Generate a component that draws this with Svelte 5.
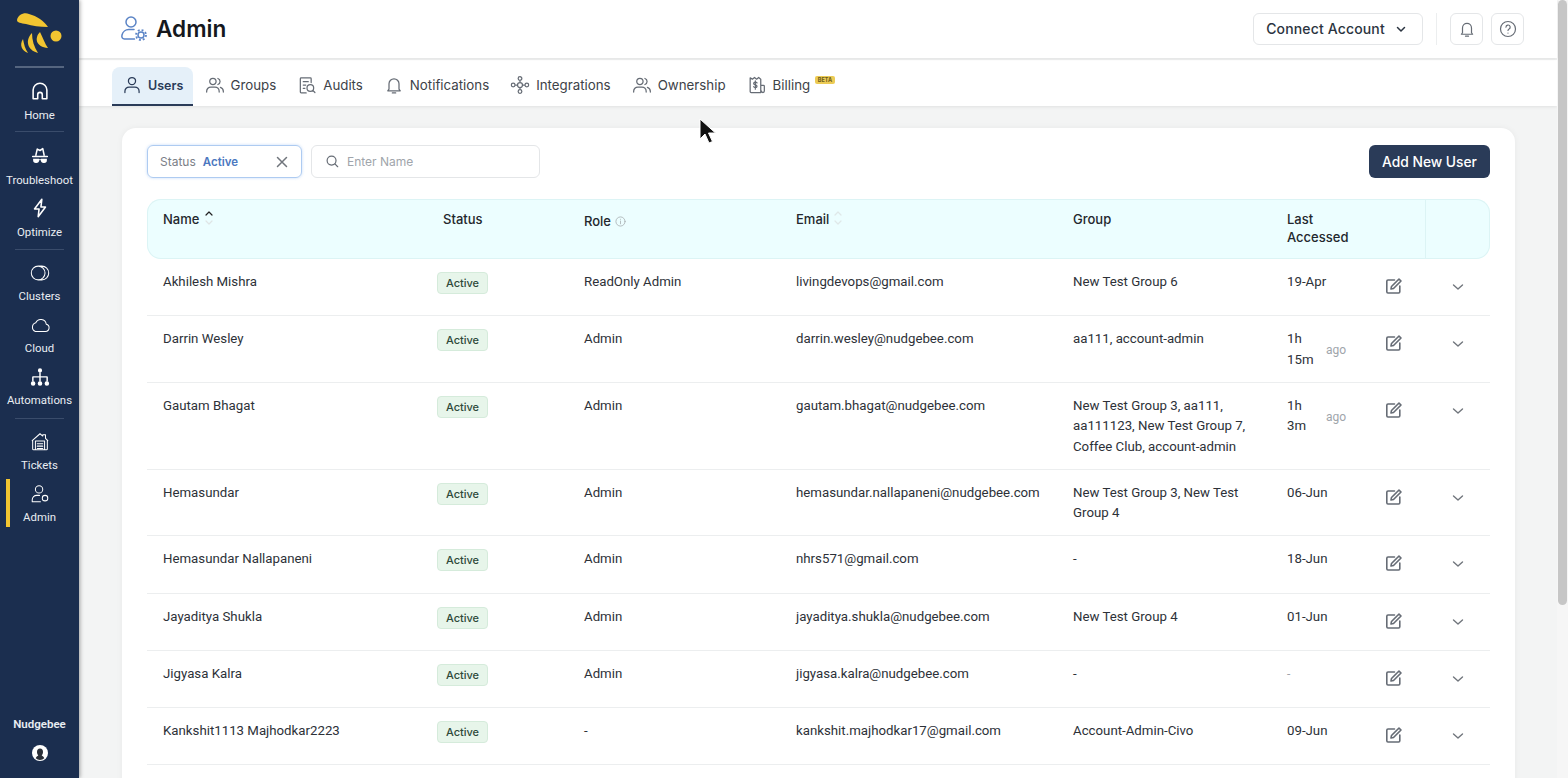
<script>
  const poke = 'M12 3a4.300 4.300 0 1 1 0 8.600a4.300 4.300 0 0 1 0-8.600z M3.500 21v-1.500a5 5 0 0 1 5-5h7a5 5 0 0 1 5 5V21';
  const people = 'M9.500 4a3.800 3.800 0 1 1 0 7.600a3.800 3.800 0 0 1 0-7.600z M2 20.500v-1a5 5 0 0 1 5-5h5a5 5 0 0 1 5 5v1 M15.500 4.200a3.800 3.800 0 0 1 0 7.200 M18.500 14.800a5 5 0 0 1 3.500 4.700v1';

  const tabs = [
    { label: 'Users', d: poke, active: true },
    { label: 'Groups', d: people },
    { label: 'Audits', d: 'M17 9V4.500a1 1 0 0 0-1-1H5a1 1 0 0 0-1 1v16a1 1 0 0 0 1 1h6 M7.500 8h6 M7.500 12h3 M7.500 16h2 M16 11.500a4 4 0 1 1 0 8a4 4 0 0 1 0-8z M19 18.500l2.500 2.500' },
    { label: 'Notifications', d: 'M6 17v-6.500a6 6 0 0 1 12 0V17l1.500 2h-15z M10 21.500h4' },
    { label: 'Integrations', d: 'M12 9a3 3 0 1 1 0 6a3 3 0 0 1 0-6z M12 2a2.200 2.200 0 1 1 0 4.400a2.200 2.200 0 0 1 0-4.400z M12 17.600a2.200 2.200 0 1 1 0 4.400a2.200 2.200 0 0 1 0-4.400z M3.800 9.800a2.200 2.200 0 1 1 0 4.400a2.200 2.200 0 0 1 0-4.400z M20.200 9.800a2.200 2.200 0 1 1 0 4.400a2.200 2.200 0 0 1 0-4.400z M12 6.400V9 M12 15v2.600 M6 12h3 M15 12h3' },
    { label: 'Ownership', d: people },
    { label: 'Billing', d: 'M16.500 21H5a1.200 1.200 0 0 1-1.200-1.200V3.500L6.500 5L9 3l2.500 2L14 3l2.500 2z M16.500 12.500h3.300a1 1 0 0 1 1 1v5.800a1.700 1.700 0 0 1-3.400 0 M12 9.500c-.5-.8-1.200-1-2-1c-1.200 0-2 .7-2 1.600c0 2.200 4 1.200 4 3.400c0 1-.9 1.600-2 1.600c-.9 0-1.600-.3-2-1 M10 7v10', beta: true }
  ];

  const nav = [
    [{ label: 'Home', d: 'M4.500 20.500v-9.500a7.500 7.500 0 0 1 15 0v9.500h-5v-4.500a2.500 2.500 0 0 0-5 0v4.500z' }],
    [
      { label: 'Troubleshoot', d: 'M7.500 11L9 4.500l3 1.500l3-2l1.500 7 M4 12.500h16', solid: 'M4.500 15h6.500v1.500a3 3 0 0 1-3 3H7.500a3 3 0 0 1-3-3z M13 15h6.500v1.500a3 3 0 0 1-3 3H16a3 3 0 0 1-3-3z M11 15.500h2v1h-2z' },
      { label: 'Optimize', d: 'M14 2.500L6 13h5l-1 8.500l8-10.500h-5z' }
    ],
    [
      { label: 'Clusters', thin: true, d: 'M10 4.500a7.500 7.500 0 1 1 0 15a7.500 7.500 0 0 1 0-15z M10 4.500h4a7.500 7.500 0 0 1 0 15h-4' },
      { label: 'Cloud', thin: true, d: 'M7 19h11a4 4 0 0 0 .8-7.900a6 6 0 0 0-11.400-1.600A5 5 0 0 0 7 19z' },
      { label: 'Automations', fill: true, d: 'M12 2.500a2.300 2.300 0 1 1 0 4.600a2.300 2.300 0 0 1 0-4.600z M4.500 16.500a2.500 2.500 0 1 1 0 5a2.500 2.500 0 0 1 0-5z M12 16.500a2.500 2.500 0 1 1 0 5a2.500 2.500 0 0 1 0-5z M19.500 16.500a2.500 2.500 0 1 1 0 5a2.500 2.500 0 0 1 0-5z M11.200 7h1.600v4.200h6.800a1 1 0 0 1 1 1v4.500h-1.600v-4.100h-6.200v4.100h-1.600v-4.100H5.000v4.100H3.400v-4.500a1 1 0 0 1 1-1h6.800z' }
    ],
    [
      { label: 'Tickets', thin: true, d: 'M3.500 10.500L12 3l3 2.500V4h3v4l2.500 2.500 M4 10v9.500a1 1 0 0 0 1 1h14a1 1 0 0 0 1-1V10 M7 11h10v9.500H7z M9 14h6 M9 16.500h6 M9 19h6' },
      { label: 'Admin', thin: true, d: 'M11 3a4 4 0 1 1 0 8a4 4 0 0 1 0-8z M3.500 20.500v-2a5 5 0 0 1 5-5h3 M3.500 20.500h9 M17.500 13.500a3 3 0 1 1 0 6a3 3 0 0 1 0-6z', active: true }
    ]
  ];

  const users = [
    { name: 'Akhilesh Mishra', role: 'ReadOnly Admin', email: 'livingdevops@gmail.com', group: 'New Test Group 6', last: '19-Apr' },
    { name: 'Darrin Wesley', role: 'Admin', email: 'darrin.wesley@nudgebee.com', group: 'aa111, account-admin', last: '1h 15m', ago: true },
    { name: 'Gautam Bhagat', role: 'Admin', email: 'gautam.bhagat@nudgebee.com', group: 'New Test Group 3, aa111, aa111123, New Test Group 7, Coffee Club, account-admin', last: '1h 3m', ago: true },
    { name: 'Hemasundar', role: 'Admin', email: 'hemasundar.nallapaneni@nudgebee.com', group: 'New Test Group 3, New Test Group 4', last: '06-Jun' },
    { name: 'Hemasundar Nallapaneni', role: 'Admin', email: 'nhrs571@gmail.com', group: '-', last: '18-Jun' },
    { name: 'Jayaditya Shukla', role: 'Admin', email: 'jayaditya.shukla@nudgebee.com', group: 'New Test Group 4', last: '01-Jun' },
    { name: 'Jigyasa Kalra', role: 'Admin', email: 'jigyasa.kalra@nudgebee.com', group: '-', last: '-', muted: true },
    { name: 'Kankshit1113 Majhodkar2223', role: '-', email: 'kankshit.majhodkar17@gmail.com', group: 'Account-Admin-Civo', last: '09-Jun' }
  ];
</script>

<div class="app">
  <aside class="sidebar">
    <div class="logo">
      <svg width="79" height="66" viewBox="0 0 79 66" fill="#f2c531">
        <path d="M17 20C18 15 24 12 29 14C37 16 44 21 48 27C40 27 32 26 26 24C21 23 17 23 17 20z" />
        <circle cx="56" cy="36" r="5.500" />
        <path d="M40 32C34 38 36 47 48 48C45 44 43 38 40 32z" />
        <path d="M32 33C25 40 27 50 38 53C34 47 32 40 32 33z" />
        <path d="M23 39C19 45 22 51 28 53C25 49 24 44 23 39z" />
      </svg>
    </div>
    {#each nav as group, i}
      <div class="nav-group g{i}">
        {#each group as item}
          <div class="nav-item">
            {#if item.active}<span class="nav-bar"></span>{/if}
            <svg width="22" height="22" viewBox="0 0 24 24" fill={item.fill ? '#fff' : 'none'} stroke={item.fill ? 'none' : '#fff'} stroke-width={item.thin ? 1.1 : 1.7} stroke-linecap="round" stroke-linejoin="round">
              <path d={item.d} />
              {#if item.solid}<path d={item.solid} fill="#fff" stroke="none" />{/if}
            </svg>
            <span>{item.label}</span>
          </div>
        {/each}
      </div>
    {/each}
    <div class="org">
      <div class="org-name">Nudgebee</div>
      <svg width="16" height="16" viewBox="0 0 16 16">
        <circle cx="8" cy="8" r="8" fill="#fff" />
        <path d="M8 3.500c2 0 3 1.500 3 3.500c0 1.500-.6 2.700-1.300 3.400c1 .7 2 1.200 2.600 2.800A7 7 0 0 1 8 15a7 7 0 0 1-4.300-1.800c.6-1.600 1.600-2.100 2.600-2.800C5.600 9.700 5 8.500 5 7c0-2 1-3.500 3-3.500z" fill="#2a2f38" />
      </svg>
    </div>
  </aside>

  <div class="main">
    <header class="topbar">
      <div class="title">
        <svg width="28" height="28" viewBox="0 0 28 28" fill="none" stroke="#5b84c6" stroke-width="1.500" stroke-linecap="round">
          <circle cx="11" cy="7" r="5" />
          <path d="M14 14.500H9a7 7 0 0 0-7 5.500c-.6 2.500.5 4 2.500 4h10" />
          <circle cx="21" cy="20" r="3" />
          <circle cx="21" cy="20" r="5" stroke-width="1.800" stroke-linecap="butt" stroke-dasharray="1.900 2.030" />
        </svg>
        <h1>Admin</h1>
      </div>
      <div class="top-actions">
        <button class="connect">
          Connect Account
          <svg width="12" height="12" viewBox="0 0 12 12" fill="none" stroke="#2b3440" stroke-width="1.500" stroke-linecap="round" stroke-linejoin="round"><path d="M2.500 4.500L6 8l3.500-3.500" /></svg>
        </button>
        <span class="vline"></span>
        <button class="square" aria-label="Notifications">
          <svg width="18" height="18" viewBox="0 0 24 24" fill="none" stroke="#666c75" stroke-width="1.600" stroke-linejoin="round" stroke-linecap="round"><path d="M6 17v-6.500a6 6 0 0 1 12 0V17l1.500 2h-15z M10 21.500h4" /></svg>
        </button>
        <button class="square" aria-label="Help">
          <svg width="18" height="18" viewBox="0 0 24 24" fill="none" stroke="#666c75" stroke-width="1.600" stroke-linecap="round"><circle cx="12" cy="12" r="10" /><path d="M9.300 9.500a2.800 2.800 0 1 1 4.200 2.400c-1 .6-1.500 1.100-1.500 2.100 M12 17.300v.1" /></svg>
        </button>
      </div>
    </header>

    <nav class="tabs">
      {#each tabs as tab}
        <div class="tab" class:active={tab.active}>
          <svg width="20" height="20" viewBox="0 0 24 24" fill="none" stroke={tab.active ? '#2a3b58' : '#666c75'} stroke-width="1.500" stroke-linecap="round" stroke-linejoin="round"><path d={tab.d} /></svg>
          <span>{tab.label}</span>
          {#if tab.beta}<em class="beta">BETA</em>{/if}
        </div>
      {/each}
    </nav>

    <section class="content">
      <div class="card">
        <div class="filters">
          <div class="status-filter">
            <span class="key">Status</span>
            <span class="val">Active</span>
            <svg class="clear" width="12" height="12" viewBox="0 0 12 12" stroke="#70757c" stroke-width="1.500" stroke-linecap="round"><path d="M1.500 1.500l9 9 M10.500 1.500l-9 9" /></svg>
          </div>
          <div class="search">
            <svg width="13" height="13" viewBox="0 0 14 14" fill="none" stroke="#666c75" stroke-width="1.300" stroke-linecap="round"><circle cx="6" cy="6" r="4.800" /><path d="M9.600 9.600l3 3" /></svg>
            <span>Enter Name</span>
          </div>
          <button class="add">Add New User</button>
        </div>

        <div class="thead">
          <div class="th name">
            Name
            <svg class="sort" width="10" height="16" viewBox="0 0 10 16" fill="none" stroke-width="1.200" stroke-linecap="round" stroke-linejoin="round"><path d="M2 5l3-3l3 3" stroke="#222" /><path d="M2 11l3 3l3-3" stroke="#dfe5e5" /></svg>
          </div>
          <div class="th status">Status</div>
          <div class="th role">
            Role
            <svg width="11" height="11" viewBox="0 0 12 12" fill="none" stroke="#a9b0b3" stroke-width="0.900" stroke-linecap="round"><circle cx="6" cy="6" r="5" /><path d="M6 5.500v3 M6 3.500v.1" /></svg>
          </div>
          <div class="th email">
            Email
            <svg class="sort" width="10" height="16" viewBox="0 0 10 16" fill="none" stroke="#dfe8e8" stroke-width="1.200" stroke-linecap="round" stroke-linejoin="round"><path d="M2 5l3-3l3 3" /><path d="M2 11l3 3l3-3" /></svg>
          </div>
          <div class="th">Group</div>
          <div class="th last">Last Accessed</div>
          <div class="th"></div>
          <div class="th rule"></div>
        </div>

        {#each users as u}
          <div class="row">
            <div class="cell name">{u.name}</div>
            <div class="cell status-cell"><span class="badge">Active</span></div>
            <div class="cell">{u.role}</div>
            <div class="cell">{u.email}</div>
            <div class="cell group">{u.group}</div>
            <div class="cell last" class:dim={u.muted}>
              {#if u.ago}
                <span class="when">
                  {#each u.last.split(' ') as part}<span class="part">{part}</span>{/each}
                </span>
                <span class="ago">ago</span>
              {:else}
                {u.last}
              {/if}
            </div>
            <div class="cell edit">
              <svg width="18" height="18" viewBox="0 0 18 18" fill="none" stroke="#666c75" stroke-width="1.600" stroke-linecap="round" stroke-linejoin="round"><path d="M9.500 3H3a1.200 1.200 0 0 0-1.200 1.200v10.600A1.200 1.200 0 0 0 3 16h10.600a1.200 1.200 0 0 0 1.200-1.200V9 M6.500 9.500L14 2l2 2l-7.500 7.500l-2.500.5z" /></svg>
            </div>
            <div class="cell chev">
              <svg width="14" height="14" viewBox="0 0 14 14" fill="none" stroke="#70757c" stroke-width="1.400" stroke-linecap="round" stroke-linejoin="round"><path d="M2.500 5L7 9l4.500-4" /></svg>
            </div>
          </div>
        {/each}
      </div>
    </section>
  </div>

  <div class="scrollbar"><div class="thumb"></div></div>

  <svg class="cursor" width="18" height="26" viewBox="0 0 18 26"><path d="M1 1v20l5-5l4 9l3.500-1.500l-4-8.500h7z" fill="#111" stroke="#fff" stroke-width="1" /></svg>
</div>

<style>
  :global(body) {
    margin: 0;
    background: #f3f4f4;
  }

  .app {
    display: flex;
    position: relative;
    height: 778px;
    overflow: hidden;
    font-family: Inter, "Liberation Sans", sans-serif;
    color: #2b2f36;
  }

  /* sidebar */
  .sidebar {
    width: 79px;
    flex: none;
    display: flex;
    flex-direction: column;
    background: #1b2e4f;
    box-shadow: 1px 0 4px rgba(0, 0, 0, 0.35);
    font-family: Roboto, "Liberation Sans", sans-serif;
    color: #e9edf2;
    z-index: 2;
  }

  .logo {
    height: 66px;
    line-height: 0;
  }

  .nav-group {
    margin: 0 15px;
    padding: 12px 0 1px;
    border-top: 1px solid #3a4c6b;
    display: flex;
    flex-direction: column;
  }

  .nav-group.g0 {
    border-top: 2px solid #55657f;
    padding-top: 12px;
  }

  .g0 .nav-item {
    height: 50px;
  }

  .nav-group.g1 {
    padding: 13px 0 0;
  }

  .nav-group.g2 {
    padding-bottom: 0;
  }

  .g2 .nav-item,
  .g3 .nav-item {
    gap: 0;
  }

  .nav-item {
    position: relative;
    height: 52px;
    margin: 0 -15px;
    display: flex;
    flex-direction: column;
    align-items: center;
    gap: 1px;
    font-size: 11.400px;
    line-height: 24px;
  }

  .nav-item span:last-child {
    height: 24px;
    white-space: nowrap;
  }

  .nav-bar {
    position: absolute;
    left: 6px;
    top: -4px;
    width: 4px;
    height: 48px;
    background: #f2c531;
  }

  .org {
    margin-top: auto;
    padding-bottom: 17px;
    display: flex;
    flex-direction: column;
    align-items: center;
    gap: 14px;
    font-size: 11.500px;
    font-weight: 600;
  }

  /* top area */
  .main {
    flex: 1;
    min-width: 0;
    display: flex;
    flex-direction: column;
  }

  .topbar {
    height: 58px;
    flex: none;
    display: flex;
    align-items: center;
    justify-content: space-between;
    padding: 0 33px 0 41px;
    background: #fff;
    box-shadow: 0 1px 3px rgba(0, 0, 0, 0.07);
    z-index: 1;
  }

  .title {
    display: flex;
    align-items: center;
    gap: 8px;
  }

  h1 {
    margin: 0 0 1px;
    font-size: 22.600px;
    font-weight: 600;
    color: #15181d;
  }

  .top-actions {
    display: flex;
    align-items: center;
  }

  button {
    font-family: inherit;
    cursor: pointer;
  }

  .connect {
    width: 170px;
    height: 32px;
    padding: 0 3px 1px 0;
    display: flex;
    align-items: center;
    justify-content: center;
    gap: 10px;
    background: #fff;
    border: 1px solid #e4e6e8;
    border-radius: 6px;
    font-size: 14px;
    font-weight: 500;
    letter-spacing: 0.15px;
    color: #2b3440;
  }

  .vline {
    width: 1px;
    height: 32px;
    margin: 0 13px;
    background: #eceeef;
  }

  .square {
    width: 33px;
    height: 32px;
    margin-right: 8px;
    padding: 0;
    display: flex;
    align-items: center;
    justify-content: center;
    background: #fff;
    border: 1px solid #e4e6e8;
    border-radius: 6px;
  }

  .square:last-child {
    margin-right: 0;
  }

  .tabs {
    height: 46px;
    flex: none;
    margin-top: 2px;
    padding: 7px 0 0 33px;
    box-sizing: border-box;
    display: flex;
    gap: 3px;
    background: #fff;
    box-shadow: 0 1px 3px rgba(0, 0, 0, 0.08);
  }

  .tab {
    position: relative;
    height: 39px;
    padding: 0 9px 3px;
    box-sizing: border-box;
    display: flex;
    align-items: center;
    gap: 6px;
    font-size: 13.300px;
    color: #3d4248;
    border-radius: 8px 8px 0 0;
  }

  .tab.active {
    width: 80.500px;
    padding: 0 0 1px 10px;
    gap: 6px;
    background: #e5f0f9;
    border-bottom: 2px solid #2a3b58;
    color: #2a3b58;
    font-size: 12.500px;
    font-weight: 600;
  }

  .beta {
    position: absolute;
    right: -16px;
    top: 9px;
    padding: 0 3px;
    background: #eccb55;
    border-radius: 2px;
    font-size: 5.500px;
    font-style: normal;
    font-weight: 700;
    line-height: 8px;
    color: #6b5a1c;
  }

  /* card */
  .content {
    flex: 1;
    min-height: 0;
    padding: 22px 42px 0 43px;
  }

  .card {
    padding: 17px 25px 40px;
    background: #fff;
    border-radius: 14px;
    box-shadow: 0 0 6px rgba(0, 0, 0, 0.05);
  }

  .filters {
    display: flex;
    gap: 9px;
    height: 33px;
    margin-bottom: 21px;
  }

  .status-filter,
  .search {
    display: flex;
    align-items: center;
    box-sizing: border-box;
    border-radius: 6px;
    font-size: 12px;
  }

  .status-filter {
    width: 155px;
    padding: 0 13px 0 12px;
    gap: 7px;
    border: 1px solid #aecbf1;
    box-shadow: 0 0 3px rgba(120, 170, 240, 0.45);
    color: #7b8087;
  }

  .val {
    color: #4c78c0;
    font-weight: 600;
    font-size: 11.500px;
  }

  .clear {
    margin-left: auto;
  }

  .search {
    width: 229px;
    padding: 0 14px;
    gap: 8px;
    border: 1px solid #e4e6e8;
    color: #a0a5ab;
  }

  .add {
    width: 121px;
    margin-left: auto;
    padding: 0;
    background: #2a3b58;
    border: 0;
    border-radius: 6px;
    color: #fff;
    font-size: 13.800px;
    font-weight: 500;
  }

  .thead,
  .row {
    display: grid;
    grid-template-columns: 290px 147px 212px 277px 214px 99px 64px 40px;
  }

  .thead {
    height: 60px;
    box-sizing: border-box;
    background: #ecfeff;
    box-shadow: inset 0 0 0 1px #dcf4f5;
    border-radius: 14px;
    font-size: 13px;
    font-weight: 500;
    color: #23272d;
  }

  .th {
    padding-top: 11px;
    line-height: 18px;
    display: flex;
    align-items: flex-start;
    gap: 4px;
  }

  .th.name {
    padding-left: 16px;
    gap: 5px;
  }

  .th.status {
    padding-left: 6px;
  }

  .th.role {
    padding-top: 13px;
    align-items: center;
    align-self: start;
  }

  .th.last {
    width: 70px;
    padding-right: 20px;
  }

  .th.rule {
    margin-left: -25px;
    border-left: 1px solid #dcf4f5;
  }

  .row {
    min-height: 57.300px;
    box-sizing: border-box;
    padding-bottom: 11.500px;
    border-bottom: 1px solid #eceeef;
    font-family: Roboto, "Liberation Sans", sans-serif;
    font-size: 13.250px;
    line-height: 20.500px;
    color: #2d3138;
  }

  .cell {
    padding-top: 13px;
  }

  .cell.name {
    padding-left: 16px;
  }

  .cell.group {
    padding-right: 24px;
  }

  .badge {
    display: block;
    width: 51px;
    height: 22px;
    box-sizing: border-box;
    background: #e7f5ea;
    border: 1px solid #d5ebdb;
    border-radius: 4px;
    font-family: Inter, "Liberation Sans", sans-serif;
    font-size: 11px;
    font-weight: 500;
    line-height: 20px;
    text-align: center;
    color: #2f4a3a;
  }

  .cell.last {
    display: flex;
    align-items: center;
    align-self: start;
  }

  .when {
    width: 39px;
  }

  .part {
    display: block;
  }

  .ago {
    padding-top: 1px;
    font-size: 12px;
    color: #a0a5ab;
  }

  .dim {
    color: #a0a5ab;
    font-size: 12px;
  }

  .edit {
    padding: 18px 0 0 0;
    margin-left: -1px;
    line-height: 0;
  }

  .chev {
    padding: 21px 0 0 1px;
    line-height: 0;
  }

  /* page scrollbar */
  .scrollbar {
    width: 11px;
    flex: none;
    background: #f6f6f6;
  }

  .thumb {
    width: 9px;
    height: 605px;
    margin: 0 1px;
    background: #c6c6c6;
    border-radius: 5px;
  }

  .cursor {
    position: absolute;
    left: 699px;
    top: 118px;
    z-index: 3;
  }
</style>
